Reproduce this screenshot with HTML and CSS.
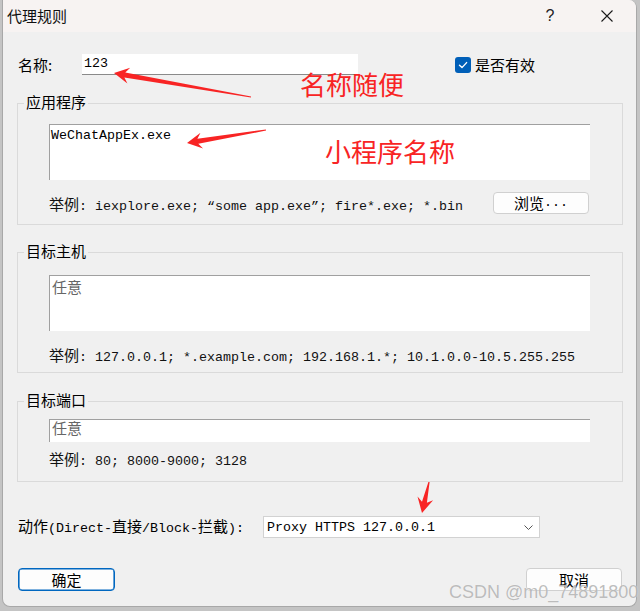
FILE: index.html
```html
<!DOCTYPE html>
<html lang="zh-CN">
<head>
<meta charset="utf-8">
<title>代理规则</title>
<link rel="stylesheet" href="styles.css">
</head>
<body>
<div class="dialog">
  <div class="titlebar">
    <span class="title">代理规则</span>
    <span class="tb-btn help">?</span>
    <span class="tb-btn close">
      <svg width="12" height="12" viewBox="0 0 12 12"><path d="M0.5 0.5 L11.5 11.5 M11.5 0.5 L0.5 11.5" stroke="#1a1a1a" stroke-width="1.1" fill="none"/></svg>
    </span>
  </div>
  <div class="content">
    <div class="name-row">
      <span class="zh lbl">名称:</span>
      <div class="name-input">123</div>
      <div class="check">
        <span class="box"><svg width="16" height="16" viewBox="0 0 16 16"><path d="M4.5 8.3 L7 10.6 L11.6 5.6" stroke="#fff" stroke-width="1.4" fill="none" stroke-linecap="round" stroke-linejoin="round"/></svg></span>
        <span class="zh">是否有效</span>
      </div>
    </div>

    <div class="group g1">
      <div class="legend zh">应用程序</div>
      <div class="area a1">WeChatAppEx.exe</div>
      <div class="ex-row">
        <span class="ex"><span class="zh">举例</span>: iexplore.exe; “some app.exe”; fire*.exe; *.bin</span>
        <div class="btn browse"><span class="zh">浏览</span>...</div>
      </div>
    </div>

    <div class="group g2">
      <div class="legend zh">目标主机</div>
      <div class="area a2"><span class="any">任意</span></div>
      <div class="ex ex2"><span class="zh">举例</span>: 127.0.0.1; *.example.com; 192.168.1.*; 10.1.0.0-10.5.255.255</div>
    </div>

    <div class="group g3">
      <div class="legend zh">目标端口</div>
      <div class="field"><span class="any">任意</span></div>
      <div class="ex ex3"><span class="zh">举例</span>: 80; 8000-9000; 3128</div>
    </div>

    <div class="action-row">
      <span class="action-lbl"><span class="zh">动作</span>(Direct-<span class="zh">直接</span>/Block-<span class="zh">拦截</span>):</span>
      <div class="select">
        <span>Proxy HTTPS 127.0.0.1</span>
        <svg width="9" height="5" viewBox="0 0 9 5"><path d="M0.5 0.5 L4.5 4.5 L8.5 0.5" stroke="#555" stroke-width="1" fill="none"/></svg>
      </div>
    </div>

    <div class="btn-row">
      <div class="btn ok zh">确定</div>
      <div class="btn cancel zh">取消</div>
    </div>
  </div>
</div>

<div class="note n1">名称随便</div>
<div class="note n2">小程序名称</div>
<svg class="arrows" width="640" height="611" viewBox="0 0 640 611">
  <polygon fill="#f82424" points="114,73 130.2,67.7 125.3,72.4 251.1,96.4 250.9,97.6 124.4,77.4 127.4,83.5"/>
  <polygon fill="#f82424" points="187,143 200.5,132.7 197.4,138.8 265.9,129.4 266.1,130.6 198.3,143.7 203.1,148.5"/>
  <polygon fill="#f82424" points="422,513 417.5,496.6 422,501.7 428.4,481.9 429.6,482.1 426.9,502.8 433.1,500.2"/>
</svg>
<div class="watermark">CSDN @m0_74891800</div>
</body>
</html>
```

FILE: styles.css
```css
* {
  box-sizing: border-box;
  margin: 0;
  padding: 0;
}

html, body {
  width: 640px;
  height: 611px;
  overflow: hidden;
}

body {
  background: #c4c4c4;
  padding: 0 3px 4px 2px;
  font-family: "Liberation Mono", "Noto Sans CJK SC", monospace;
  font-size: 13.33px;
  color: #000;
}

.zh {
  font-family: "Noto Sans CJK SC", sans-serif;
  font-size: 15px;
}

.ex .zh,
.action-lbl .zh,
.browse .zh {
  line-height: 14px;
}

.dialog {
  position: relative;
  width: 635px;
  height: 607px;
  background: #f0f0f0;
  border: 1px solid #a8a8a8;
  border-top: 0;
  border-radius: 0 8px 8px 8px;
  overflow: hidden;
}

.titlebar {
  height: 32px;
  display: flex;
  align-items: center;
  background: #f7f3f2;
  padding: 0 6px 0 4px;
  gap: 11px;
}

.title {
  flex: 1;
  font-family: "Noto Sans CJK SC", sans-serif;
  font-size: 15px;
  line-height: 20px;
  color: #111;
}

.tb-btn {
  width: 46px;
  height: 32px;
  display: flex;
  align-items: center;
  justify-content: center;
}

.help {
  font-family: "Liberation Sans", sans-serif;
  font-size: 16px;
  color: #222;
}

.content {
  padding-top: 22px;
}

.name-row {
  display: flex;
  align-items: center;
  height: 21px;
  padding-left: 15px;
}

.lbl {
  width: 64px;
  line-height: 21px;
}

.name-input {
  width: 276px;
  height: 21px;
  background: #fff;
  border-bottom: 1px solid #8a8a8a;
  padding-left: 2px;
  line-height: 20px;
}

.check {
  margin-left: 97px;
  display: flex;
  align-items: center;
  gap: 4px;
}

.box {
  width: 16px;
  height: 16px;
  border-radius: 3px;
  background: #005fb8;
  display: flex;
}

.group {
  margin: 0 13px 0 14px;
  border: 1px solid #dadada;
  padding-left: 31px;
}

.legend {
  height: 20px;
  width: max-content;
  line-height: 18px;
  margin: -11px 0 0 -25px;
  padding: 0 2px;
  background: #f0f0f0;
}

.g1 {
  margin-top: 28px;
  padding-bottom: 10px;
}

.g2 {
  margin-top: 27px;
  padding-bottom: 4px;
}

.g3 {
  margin-top: 28px;
  padding-bottom: 9px;
}

.area {
  width: 541px;
  height: 56px;
  background: #fff;
  border-top: 1px solid #a0a0a0;
  border-left: 1px solid #a0a0a0;
  padding: 2px 0 0 1px;
  line-height: 18px;
}

.a1 {
  margin-top: 11px;
}

.a2 {
  margin-top: 13px;
  padding-left: 2px;
}

.any {
  font-family: "Noto Sans CJK SC", sans-serif;
  font-size: 15px;
  color: #666;
}

.field {
  margin-top: 8px;
  width: 541px;
  height: 23px;
  background: #fff;
  border-top: 1px solid #a0a0a0;
  border-left: 1px solid #a0a0a0;
  padding-left: 2px;
  line-height: 16px;
}

.ex-row {
  width: 541px;
  height: 22px;
  margin-top: 12px;
  display: flex;
  justify-content: space-between;
  align-items: flex-start;
}

.ex {
  display: block;
  height: 20px;
  line-height: 20px;
  white-space: pre;
  color: #111;
}

.ex-row .ex {
  margin-top: 5px;
}

.ex2 {
  margin-top: 17px;
}

.ex3 {
  margin-top: 10px;
}

.btn {
  height: 22px;
  display: flex;
  align-items: center;
  justify-content: center;
  background: #fdfdfd;
  border: 1px solid #d0d0d0;
  border-radius: 4px;
  line-height: 18px;
}

.browse {
  width: 96px;
  margin-right: 1px;
}

.action-row {
  margin-top: 34px;
  height: 22px;
  padding-left: 15px;
  display: flex;
  align-items: center;
}

.action-lbl {
  width: 245px;
  height: 20px;
  line-height: 20px;
  margin-top: 3px;
  white-space: pre;
}

.select {
  width: 277px;
  height: 22px;
  background: #fff;
  border: 1px solid #d2d2d2;
  display: flex;
  align-items: center;
  justify-content: space-between;
  padding: 0 6px 0 3px;
}

.btn-row {
  margin-top: 30px;
  padding: 0 14px 0 15px;
  display: flex;
  justify-content: space-between;
}

.ok {
  width: 97px;
  height: 23px;
  border: 1px solid #0067c0;
  box-shadow: inset 0 0 0 0.6px #0067c0;
}

.cancel {
  width: 96px;
  height: 23px;
}

.note {
  position: absolute;
  font-family: "Noto Sans CJK SC", sans-serif;
  font-size: 26px;
  line-height: 28px;
  color: #f82424;
  white-space: nowrap;
}

.n1 {
  left: 300px;
  top: 70px;
}

.n2 {
  left: 325px;
  top: 137px;
}

.arrows {
  position: absolute;
  left: 0;
  top: 0;
  pointer-events: none;
}

.watermark {
  position: absolute;
  left: 449px;
  top: 581px;
  font-family: "Liberation Sans", sans-serif;
  font-size: 18px;
  line-height: 22px;
  color: rgba(160, 160, 160, 0.7);
  text-shadow: 0 0 1px rgba(255, 255, 255, 0.8);
  white-space: nowrap;
}
```
